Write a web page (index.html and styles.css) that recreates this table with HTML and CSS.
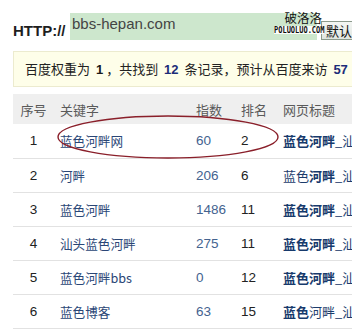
FILE: index.html
```html
<!DOCTYPE html>
<html lang="zh-CN">
<head>
<meta charset="utf-8">
<title>百度权重查询</title>
<link rel="stylesheet" href="styles.css">
</head>
<body>
<div class="page">
  <div class="urlbar">
    <span class="proto">HTTP://</span>
    <div class="domain">bbs-hepan.com</div>
    <button class="btn">默认</button>
  </div>
  <div class="watermark">
    <span class="wm-cn">破洛洛</span>
    <span class="wm-en">POLUOLUO.COM</span>
  </div>
  <div class="summary">百度权重为 <b>1</b>，共找到 <b class="num">12</b> 条记录，预计从百度来访 <b class="num">57</b> 次</div>
  <div class="tablewrap">
    <table class="rank">
      <colgroup>
        <col class="w-no"><col class="w-kw"><col class="w-idx"><col class="w-rk"><col class="w-tt">
      </colgroup>
      <thead>
        <tr><th class="c-no">序号</th><th class="c-kw">关键字</th><th class="c-idx">指数</th><th class="c-rk">排名</th><th class="c-tt">网页标题</th></tr>
      </thead>
      <tbody>
        <tr><td class="c-no">1</td><td class="c-kw">蓝色河畔网</td><td class="c-idx">60</td><td class="c-rk">2</td><td class="c-tt"><b>蓝色河畔</b>_汕头蓝色河畔网</td></tr>
        <tr><td class="c-no">2</td><td class="c-kw">河畔</td><td class="c-idx">206</td><td class="c-rk">6</td><td class="c-tt">蓝色<b>河畔</b>_汕头蓝色河畔网</td></tr>
        <tr><td class="c-no">3</td><td class="c-kw">蓝色河畔</td><td class="c-idx">1486</td><td class="c-rk">11</td><td class="c-tt"><b>蓝色河畔</b>_汕头蓝色河畔网</td></tr>
        <tr><td class="c-no">4</td><td class="c-kw">汕头蓝色河畔</td><td class="c-idx">275</td><td class="c-rk">11</td><td class="c-tt"><b>蓝色河畔</b>_汕头蓝色河畔网</td></tr>
        <tr><td class="c-no">5</td><td class="c-kw">蓝色河畔bbs</td><td class="c-idx">0</td><td class="c-rk">12</td><td class="c-tt"><b>蓝色河畔</b>_汕头蓝色河畔网</td></tr>
        <tr><td class="c-no">6</td><td class="c-kw">蓝色博客</td><td class="c-idx">63</td><td class="c-rk">15</td><td class="c-tt"><b>蓝色</b>河畔_汕头蓝色河畔网</td></tr>
      </tbody>
    </table>
    <svg class="circle" width="240" height="50" viewBox="0 0 240 50">
      <ellipse cx="112" cy="22" rx="110" ry="21" fill="none" stroke="#8a1f2a" stroke-width="1.4"/>
    </svg>
  </div>
</div>
</body>
</html>
```

FILE: styles.css
```css
html, body {
  margin: 0;
  padding: 0;
  background: #ffffff;
  overflow: hidden;
}
body {
  font-family: "Liberation Sans", Arial, "Noto Sans CJK SC", sans-serif;
  color: #222;
  width: 352px;
  height: 330px;
}
.page {
  position: relative;
  padding: 13px 0 0 13px;
  width: 520px;
}
.urlbar {
  display: flex;
  align-items: flex-start;
  height: 27px;
}
.proto {
  font-weight: bold;
  font-size: 15px;
  color: #1e1e1e;
  margin-top: 10px;
  width: 57px;
  line-height: 15px;
}
.domain {
  background: #cde7cd;
  width: 247px;
  height: 27px;
  padding-left: 2px;
  font-size: 15px;
  line-height: 22px;
  color: #444;
  box-sizing: border-box;
}
.btn {
  margin-left: 4px;
  margin-top: 8px;
  height: 19px;
  padding: 0 4px;
  border: 1px solid #8c9a8c;
  background: linear-gradient(#f4f6f4, #dfe5df);
  font-family: "Noto Sans CJK SC", sans-serif;
  font-size: 13px;
  line-height: 15px;
  color: #111;
}
.watermark {
  position: absolute;
  top: 10px;
  left: 268px;
  width: 56px;
  display: flex;
  flex-direction: column;
  align-items: flex-end;
}
.wm-cn {
  font-family: "Noto Sans CJK SC", sans-serif;
  font-size: 12.5px;
  line-height: 15px;
  color: #111;
  margin-right: 2px;
}
.wm-en {
  font-family: "DejaVu Sans Mono", monospace;
  font-weight: bold;
  font-size: 8.5px;
  line-height: 8px;
  color: #111;
  background: rgba(255,255,255,0.9);
  margin-top: 1px;
  transform: scaleX(0.82);
  transform-origin: right center;
}
.summary {
  margin-top: 11px;
  width: 480px;
  height: 36px;
  box-sizing: border-box;
  background: #fefee9;
  border: 1px solid #ecebcf;
  padding-left: 11px;
  font-family: "Noto Sans CJK SC", sans-serif;
  font-size: 13px;
  line-height: 34px;
  color: #222;
  white-space: nowrap;
}
.summary b {
  font-family: "Liberation Sans", Arial, sans-serif;
  font-size: 13px;
  margin: 0 3px;
  color: #1a1a1a;
}
.summary b.num {
  color: #1c2c78;
}
.tablewrap {
  position: relative;
  margin-top: 7px;
}
.rank {
  border-collapse: collapse;
  width: 480px;
  table-layout: fixed;
  font-family: "Liberation Sans", Arial, "Noto Sans CJK SC", sans-serif;
  font-size: 13px;
}
.w-no { width: 41px; }
.w-kw { width: 136px; }
.w-idx { width: 45px; }
.w-rk { width: 42px; }
.rank th, .rank td {
  box-sizing: border-box;
  padding: 0 0 0 6px;
}
.rank th {
  background: #efefef;
  color: #5a5a5a;
  font-weight: normal;
  height: 30px;
  text-align: left;
  font-family: "Noto Sans CJK SC", sans-serif;
}
.rank td {
  height: 34px;
  border-bottom: 1px solid #e2e2e2;
  white-space: nowrap;
  overflow: hidden;
}
.rank .c-no { text-align: center; padding: 0; }
.rank td.c-no { color: #222; font-size: 13.5px; }
.rank td.c-kw { color: #2a4676; font-family: "Noto Sans CJK SC", "Liberation Sans", sans-serif; font-size: 12.6px; }
.rank td.c-idx { color: #44638f; font-size: 13.5px; }
.rank td.c-rk { color: #222; font-size: 13.5px; }
.rank td.c-tt { color: #1c3c6c; font-family: "Noto Sans CJK SC", sans-serif; }
.rank td.c-tt b { color: #173a6c; font-weight: bold; }
.circle {
  position: absolute;
  left: 43px;
  top: 21px;
}
```
